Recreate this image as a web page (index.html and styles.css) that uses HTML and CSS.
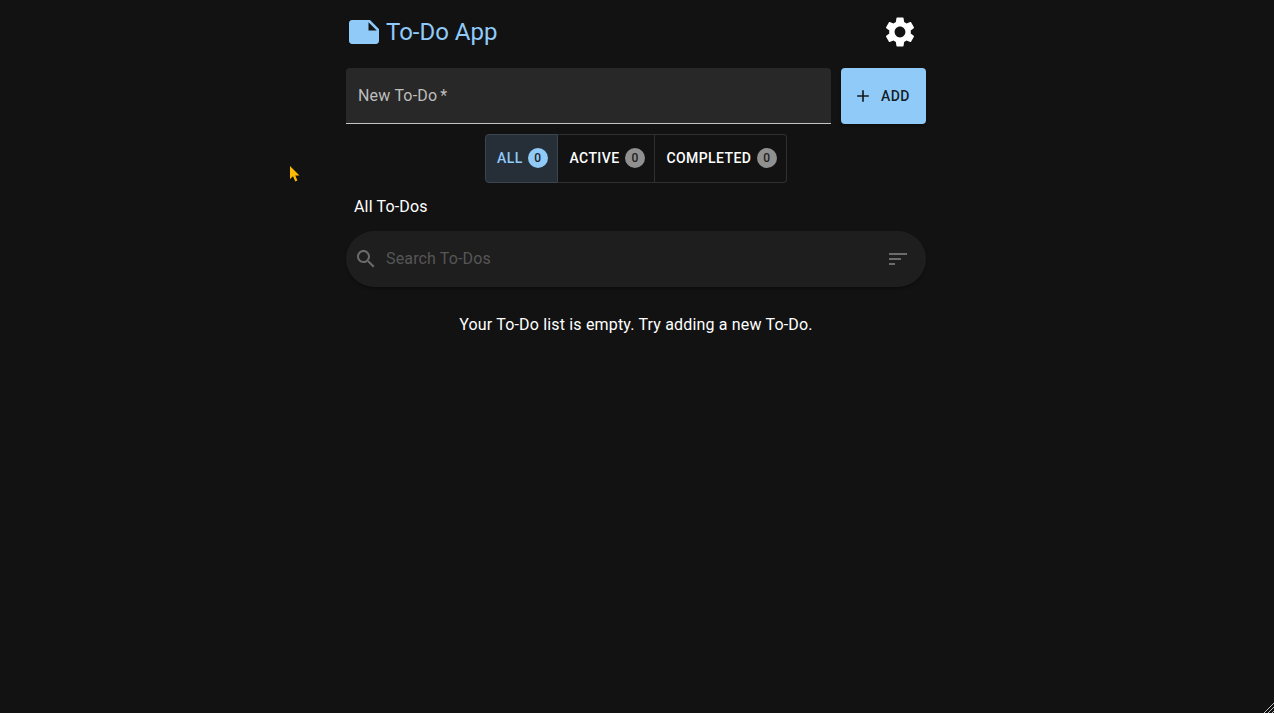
FILE: index.html
```
<!DOCTYPE html>
<html lang="en">
<head>
<meta charset="utf-8">
<title>To-Do App</title>
<link rel="stylesheet" href="styles.css">
</head>
<body>
<main class="app">
  <header class="header">
    <svg class="logo" viewBox="0 0 24 24"><path d="m22 10-6-6H4c-1.1 0-2 .9-2 2v12.01c0 1.1.9 1.99 2 1.99l16-.01c1.1 0 2-.89 2-1.99v-8zm-7-4.5 5.5 5.5H15V5.5z"/></svg>
    <h1 class="title">To-Do App</h1>
    <button class="settings" aria-label="Settings"><svg viewBox="0 0 24 24"><path d="M19.14 12.94c.04-.3.06-.61.06-.94 0-.32-.02-.64-.07-.94l2.03-1.58c.18-.14.23-.41.12-.61l-1.92-3.32c-.12-.22-.37-.29-.59-.22l-2.39.96c-.5-.38-1.03-.7-1.62-.94l-.36-2.54c-.04-.24-.24-.41-.48-.41h-3.84c-.24 0-.43.17-.47.41l-.36 2.54c-.59.24-1.13.57-1.62.94l-2.39-.96c-.22-.08-.47 0-.59.22L2.74 8.87c-.12.21-.08.47.12.61l2.03 1.58c-.05.3-.09.63-.09.94s.02.64.07.94l-2.03 1.58c-.18.14-.23.41-.12.61l1.92 3.32c.12.22.37.29.59.22l2.39-.96c.5.38 1.03.7 1.62.94l.36 2.54c.05.24.24.41.48.41h3.84c.24 0 .44-.17.47-.41l.36-2.54c.59-.24 1.13-.56 1.62-.94l2.39.96c.22.08.47 0 .59-.22l1.92-3.32c.12-.22.07-.47-.12-.61l-2.01-1.58zM12 15.6c-1.98 0-3.6-1.62-3.6-3.6s1.62-3.6 3.6-3.6 3.6 1.62 3.6 3.6-1.62 3.6-3.6 3.6z"/></svg></button>
  </header>
  <form class="new-todo">
    <div class="field">New To-Do<span class="required">*</span></div>
    <button class="add" type="button"><svg viewBox="0 0 24 24"><path d="M19 13h-6v6h-2v-6H5v-2h6V5h2v6h6v2z"/></svg>ADD</button>
  </form>
  <nav class="filters">
    <button class="filter filter-selected">ALL<span class="count">0</span></button>
    <button class="filter filter-active">ACTIVE<span class="count">0</span></button>
    <button class="filter filter-completed">COMPLETED<span class="count">0</span></button>
  </nav>
  <h2 class="list-title">All To-Dos</h2>
  <div class="search">
    <svg viewBox="0 0 24 24"><path d="M15.5 14h-.79l-.28-.27C15.41 12.59 16 11.11 16 9.5 16 5.91 13.09 3 9.5 3S3 5.91 3 9.5 5.91 16 9.5 16c1.61 0 3.09-.59 4.23-1.57l.27.28v.79l5 4.99L20.49 19l-4.99-5zm-6 0C7.01 14 5 11.99 5 9.5S7.01 5 9.5 5 14 7.01 14 9.5 11.99 14 9.5 14z"/></svg>
    <span class="search-text">Search To-Dos</span>
    <svg viewBox="0 0 24 24"><path d="M3 18h6v-2H3v2zM3 6v2h18V6H3zm0 7h12v-2H3v2z"/></svg>
  </div>
  <p class="empty">Your To-Do list is empty. Try adding a new To-Do.</p>
</main>
<svg class="pointer" viewBox="0 0 12 18"><path d="M1 1V14L4 11.3 6.3 16.4 8.4 15.5 6.3 10.6H10.5Z"/></svg>
<svg class="grip" viewBox="0 0 10 10"><path d="M0 10 10 0M4 10 10 4M8 10 10 8"/></svg>
</body>
</html>
```
FILE: styles.css
```
* { box-sizing: border-box; }
body {
  margin: 0;
  height: 713px;
  overflow: hidden;
  background: #121212;
  color: #fff;
  font-family: Roboto, sans-serif;
  font-size: 16px;
  line-height: 24px;
}
svg { display: block; fill: currentColor; flex: none; }
button {
  margin: 0;
  border: 0;
  padding: 0;
  background: none;
  color: inherit;
  font: 500 14px/24px Roboto, sans-serif;
  letter-spacing: 0.4px;
}
h1, h2, p { margin: 0; font-weight: 400; }
.app { width: 580px; margin-left: 346px; }
.header { display: flex; align-items: center; height: 64px; padding-right: 8px; color: #90caf9; }
.logo { width: 36px; height: 36px; }
.title { margin-left: 4px; font-size: 24px; line-height: 32px; }
.settings { margin-left: auto; color: #fff; }
.settings svg { width: 36px; height: 36px; }
.new-todo { display: flex; gap: 10px; margin-top: 4px; }
.field {
  width: 485px;
  height: 56px;
  padding: 16px 12px;
  border-bottom: 1px solid #c4c4c4;
  border-radius: 4px 4px 0 0;
  background: #282828;
  color: #bebebe;
  letter-spacing: 0.2px;
}
.required { margin-left: 3px; }
.add {
  display: flex;
  align-items: center;
  width: 85px;
  height: 56px;
  padding-left: 12px;
  border-radius: 4px;
  background: #90caf9;
  color: rgba(0, 0, 0, 0.87);
  box-shadow: 0 2px 3px rgba(0, 0, 0, 0.3);
}
.add svg { width: 20px; height: 20px; margin-right: 8px; }
.filters { display: flex; width: 302px; height: 49px; margin: 10px 0 0 139px; }
.filter {
  display: flex;
  align-items: center;
  padding: 0 0 1px 11.5px;
  border: 1px solid #303030;
  border-left: 0;
}
.filter-selected {
  width: 73px;
  padding-left: 11px;
  border: 1px solid #3c464f;
  border-radius: 4px 0 0 4px;
  background: #262f38;
  color: #90caf9;
}
.filter-active { width: 97px; }
.filter-completed { width: 132px; border-radius: 0 4px 4px 0; }
.count {
  width: 20px;
  height: 20px;
  margin-left: 5.5px;
  border-radius: 10px;
  background: #909090;
  color: #212121;
  font-size: 12px;
  line-height: 20px;
  letter-spacing: 0;
  text-align: center;
}
.filter-selected .count { margin-left: 5px; background: #90caf9; }
.list-title { margin-top: 12px; padding-left: 8px; font-size: 16px; letter-spacing: 0.15px; }
.search {
  display: flex;
  align-items: center;
  height: 56px;
  margin-top: 12px;
  padding: 0 16px 0 8px;
  border-radius: 28px;
  background: #1e1e1e;
  color: #6b6b6b;
  box-shadow: 0 2px 3px rgba(0, 0, 0, 0.3);
}
.search svg { width: 24px; height: 24px; }
.search-text { margin: 0 auto 0 8px; color: #565656; letter-spacing: 0.15px; }
.empty { margin-top: 26px; text-align: center; letter-spacing: 0.17px; }
.pointer { position: absolute; left: 289px; top: 165px; width: 12px; height: 18px; fill: #ffb900; }
.grip { position: absolute; right: 0; bottom: 0; width: 10px; height: 10px; fill: none; stroke: #bdbdbd; stroke-width: 1; }
```
